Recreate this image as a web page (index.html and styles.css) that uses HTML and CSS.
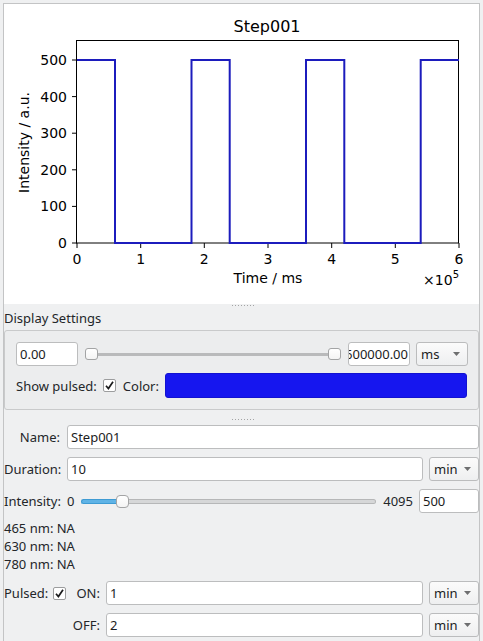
FILE: index.html
```html
<!DOCTYPE html>
<html>
<head>
<meta charset="utf-8">
<link rel="stylesheet" href="styles.css">
</head>
<body>
<div class="frame">
  <div class="plot">
    <svg class="chart" width="475" height="300" viewBox="4 4 475 300">
      <text class="title" x="267" y="32">Step001</text>
      <g class="ticks">
        <line x1="72" y1="60" x2="77" y2="60"/>
        <line x1="72" y1="96.6" x2="77" y2="96.6"/>
        <line x1="72" y1="133.2" x2="77" y2="133.2"/>
        <line x1="72" y1="169.8" x2="77" y2="169.8"/>
        <line x1="72" y1="206.4" x2="77" y2="206.4"/>
        <line x1="72" y1="243" x2="77" y2="243"/>
        <line x1="77" y1="243" x2="77" y2="248"/>
        <line x1="140.7" y1="243" x2="140.7" y2="248"/>
        <line x1="204.3" y1="243" x2="204.3" y2="248"/>
        <line x1="268" y1="243" x2="268" y2="248"/>
        <line x1="331.7" y1="243" x2="331.7" y2="248"/>
        <line x1="395.3" y1="243" x2="395.3" y2="248"/>
        <line x1="459" y1="243" x2="459" y2="248"/>
      </g>
      <g class="ylabels">
        <text x="67" y="65">500</text>
        <text x="67" y="101.6">400</text>
        <text x="67" y="138.2">300</text>
        <text x="67" y="174.8">200</text>
        <text x="67" y="211.4">100</text>
        <text x="67" y="248">0</text>
      </g>
      <g class="xlabels">
        <text x="77" y="264">0</text>
        <text x="140.7" y="264">1</text>
        <text x="204.3" y="264">2</text>
        <text x="268" y="264">3</text>
        <text x="331.7" y="264">4</text>
        <text x="395.3" y="264">5</text>
        <text x="459" y="264">6</text>
      </g>
      <rect class="spine" x="76.5" y="40.5" width="382" height="202.5"/>
      <polyline class="trace" points="77,60 115,60 115,243 191.5,243 191.5,60 229.7,60 229.7,243 306,243 306,60 344.3,60 344.3,243 420.7,243 420.7,60 459,60"/>
      <text class="axlabel" x="268" y="283">Time / ms</text>
      <text class="axlabel" transform="translate(29,142.5) rotate(-90)" x="0" y="0">Intensity / a.u.</text>
      <text class="offset" x="459" y="285">×10<tspan class="sup" dy="-7">5</tspan></text>
    </svg>
  </div>

  <div class="handle"><span class="dots"></span></div>
  <div class="group-title">Display Settings</div>
  <div class="group">
    <div class="grow">
      <div class="input w62">0.00</div>
      <div class="range">
        <span class="knob"></span>
        <span class="knob"></span>
      </div>
      <div class="input w62 clip"><span>600000.00</span></div>
      <div class="combo w52"><span>ms</span><svg class="arrow" width="7" height="4" viewBox="0 0 7 4"><polygon points="0,0 7,0 3.5,4"/></svg></div>
    </div>
    <div class="grow row2">
      <span class="lbl">Show pulsed:</span>
      <span class="check"><svg width="11" height="11" viewBox="0 0 11 11"><path d="M2 5.8 L4.4 8.6 L9 1.8"/></svg></span>
      <span class="lbl color-lbl">Color:</span>
      <div class="swatch"></div>
    </div>
  </div>

  <div class="handle handle2"><span class="dots"></span></div>

  <div class="form">
    <div class="frow">
      <span class="flabel">Name:</span>
      <div class="input fill">Step001</div>
    </div>
    <div class="frow">
      <span class="flabel">Duration:</span>
      <div class="fieldrow">
        <div class="input fill">10</div>
        <div class="combo w50"><span>min</span><svg class="arrow" width="7" height="4" viewBox="0 0 7 4"><polygon points="0,0 7,0 3.5,4"/></svg></div>
      </div>
    </div>
    <div class="frow">
      <span class="flabel">Intensity:</span>
      <div class="fieldrow intens">
        <span class="lbl">0</span>
        <div class="slider">
          <span class="sfill" style="width:calc((100% - 13px) * 0.1221)"></span>
          <span class="knob round"></span>
          <span class="srest"></span>
        </div>
        <span class="lbl">4095</span>
        <div class="input w60">500</div>
      </div>
    </div>
    <div class="nalist">
      <div class="na">465 nm: NA</div>
      <div class="na">630 nm: NA</div>
      <div class="na">780 nm: NA</div>
    </div>
    <div class="pulsed">
      <span class="lbl">Pulsed:</span>
      <span class="check"><svg width="11" height="11" viewBox="0 0 11 11"><path d="M2 5.8 L4.4 8.6 L9 1.8"/></svg></span>
      <span class="plabel">ON:</span>
      <div class="input">1</div>
      <div class="combo"><span>min</span><svg class="arrow" width="7" height="4" viewBox="0 0 7 4"><polygon points="0,0 7,0 3.5,4"/></svg></div>
      <span></span>
      <span></span>
      <span class="plabel">OFF:</span>
      <div class="input">2</div>
      <div class="combo"><span>min</span><svg class="arrow" width="7" height="4" viewBox="0 0 7 4"><polygon points="0,0 7,0 3.5,4"/></svg></div>
    </div>
  </div>
</div>
</body>
</html>
```

FILE: styles.css
```css
* { box-sizing: border-box; }

html, body {
  margin: 0;
  padding: 0;
}

body {
  width: 483px;
  height: 641px;
  overflow: hidden;
  background: #eff0f1;
  font-family: "Noto Sans", "DejaVu Sans", sans-serif;
  font-size: 13px;
  color: #232629;
}

.frame {
  margin: 3px 0 0 3px;
  width: 477px;
  height: 638px;
  border: 1px solid #c3c4c5;
  border-bottom: none;
  display: flex;
  flex-direction: column;
}

.plot {
  height: 300px;
  background: #ffffff;
  flex: none;
}

.chart {
  display: block;
  font-family: "DejaVu Sans", sans-serif;
}

.chart text { fill: #000; }
.chart .title { font-size: 16px; text-anchor: middle; }
.chart .ticks line { stroke: #000; stroke-width: 1; }
.chart .ylabels text { font-size: 14px; text-anchor: end; }
.chart .xlabels text { font-size: 14px; text-anchor: middle; }
.chart .spine { fill: none; stroke: #000; stroke-width: 1; }
.chart .trace { fill: none; stroke: #1c1cbd; stroke-width: 2; stroke-linejoin: miter; }
.chart .axlabel { font-size: 14px; text-anchor: middle; }
.chart .offset { font-size: 14px; text-anchor: end; }
.chart .sup { font-size: 10px; }

.handle {
  height: 6px;
  flex: none;
  display: flex;
  justify-content: center;
  padding-top: 1px;
}

.handle2 {
  height: 15px;
  padding-top: 9px;
}

.dots {
  display: block;
  width: 22px;
  height: 1px;
  margin-left: 2px;
  background: repeating-linear-gradient(90deg, #a3a4a5 0 1px, transparent 1px 3px);
}

.group-title {
  height: 17px;
  line-height: 17px;
  margin-bottom: 3px;
  flex: none;
}

.group {
  flex: none;
  border: 1px solid #c9cacb;
  border-radius: 3px;
  background: #ecedee;
  padding: 11px 10px 11px 11px;
  display: flex;
  flex-direction: column;
  gap: 7px;
}

.grow {
  display: flex;
  align-items: center;
  gap: 6px;
  height: 24px;
}

.row2 {
  height: 25px;
  gap: 0;
}

.input {
  height: 24px;
  background: #ffffff;
  border: 1px solid #bcbdbe;
  border-radius: 3px;
  padding: 0 3px;
  display: flex;
  align-items: center;
  white-space: nowrap;
  overflow: hidden;
  color: #1b1c1d;
}

.w62 { width: 62px; flex: none; }
.w60 { width: 60px; flex: none; }
.w52 { width: 52px; flex: none; }
.w50 { width: 50px; flex: none; }
.fill { flex: 1; min-width: 0; }

.clip {
  justify-content: flex-end;
  padding: 0 1px 0 0;
}

.range {
  flex: 1;
  height: 12px;
  display: flex;
  justify-content: space-between;
  align-items: center;
  padding: 0 1px;
  background-image: linear-gradient(#b9babb, #b9babb), linear-gradient(#d9dadb, #d9dadb);
  background-size: calc(100% - 12px) 3px, calc(100% - 14px) 1px;
  background-position: center, center;
  background-repeat: no-repeat;
}

.knob {
  display: block;
  width: 13px;
  height: 12px;
  background: linear-gradient(#ffffff, #f4f4f4);
  border: 1px solid #a3a4a5;
  border-radius: 3px;
  flex: none;
}

.knob.round {
  height: 13px;
  border-radius: 4px;
}

.combo {
  height: 24px;
  border: 1px solid #bbbcbd;
  border-radius: 3px;
  background: linear-gradient(#fbfbfb, #eeeff0);
  display: flex;
  align-items: center;
  justify-content: space-between;
  padding: 0 7px 0 4px;
  color: #1b1c1d;
}

.arrow { display: block; }
.arrow polygon { fill: #6e6f70; }

.lbl { white-space: nowrap; flex: none; }

.check {
  width: 13px;
  height: 13px;
  flex: none;
  background: #ffffff;
  border: 1px solid #9c9d9e;
  border-radius: 2px;
  display: flex;
  align-items: center;
  justify-content: center;
}
.check svg { display: block; }
.check path { fill: none; stroke: #1b1c1d; stroke-width: 1.7; }

.row2 .check { margin-left: 6px; }
.color-lbl { margin-left: 7px; }

.swatch {
  flex: 1;
  height: 25px;
  margin-left: 6px;
  margin-right: 1px;
  background: #1616ef;
  border: 1px solid #1212d0;
  border-radius: 3px;
}

.form {
  display: flex;
  flex-direction: column;
  padding-right: 0;
}

.frow {
  display: grid;
  grid-template-columns: 56px 1fr;
  column-gap: 7px;
  align-items: center;
  height: 24px;
  margin-bottom: 8px;
}

.flabel {
  text-align: right;
  white-space: nowrap;
}

.fieldrow {
  display: flex;
  align-items: center;
  gap: 6px;
  height: 24px;
}

.intens { gap: 7px; }
.intens .w60 { margin-left: -1px; }

.slider {
  flex: 1;
  display: flex;
  align-items: center;
  height: 13px;
}

.sfill {
  display: block;
  height: 5px;
  background: #5fb3e6;
  border: 1px solid #3e9bd3;
  border-right: none;
  border-radius: 3px 0 0 3px;
  flex: none;
}

.srest {
  display: block;
  flex: 1;
  height: 5px;
  background: #d6d7d8;
  border: 1px solid #b6b7b8;
  border-left: none;
  border-radius: 0 3px 3px 0;
}

.nalist {
  margin-top: -2px;
  margin-bottom: 8px;
}

.na {
  height: 18px;
  line-height: 18px;
  white-space: nowrap;
}

.pulsed {
  display: grid;
  grid-template-columns: 43px 13px 28px 1fr 50px;
  grid-auto-rows: 24px;
  column-gap: 6px;
  row-gap: 8px;
  align-items: center;
}

.plabel {
  text-align: right;
  white-space: nowrap;
}
```
